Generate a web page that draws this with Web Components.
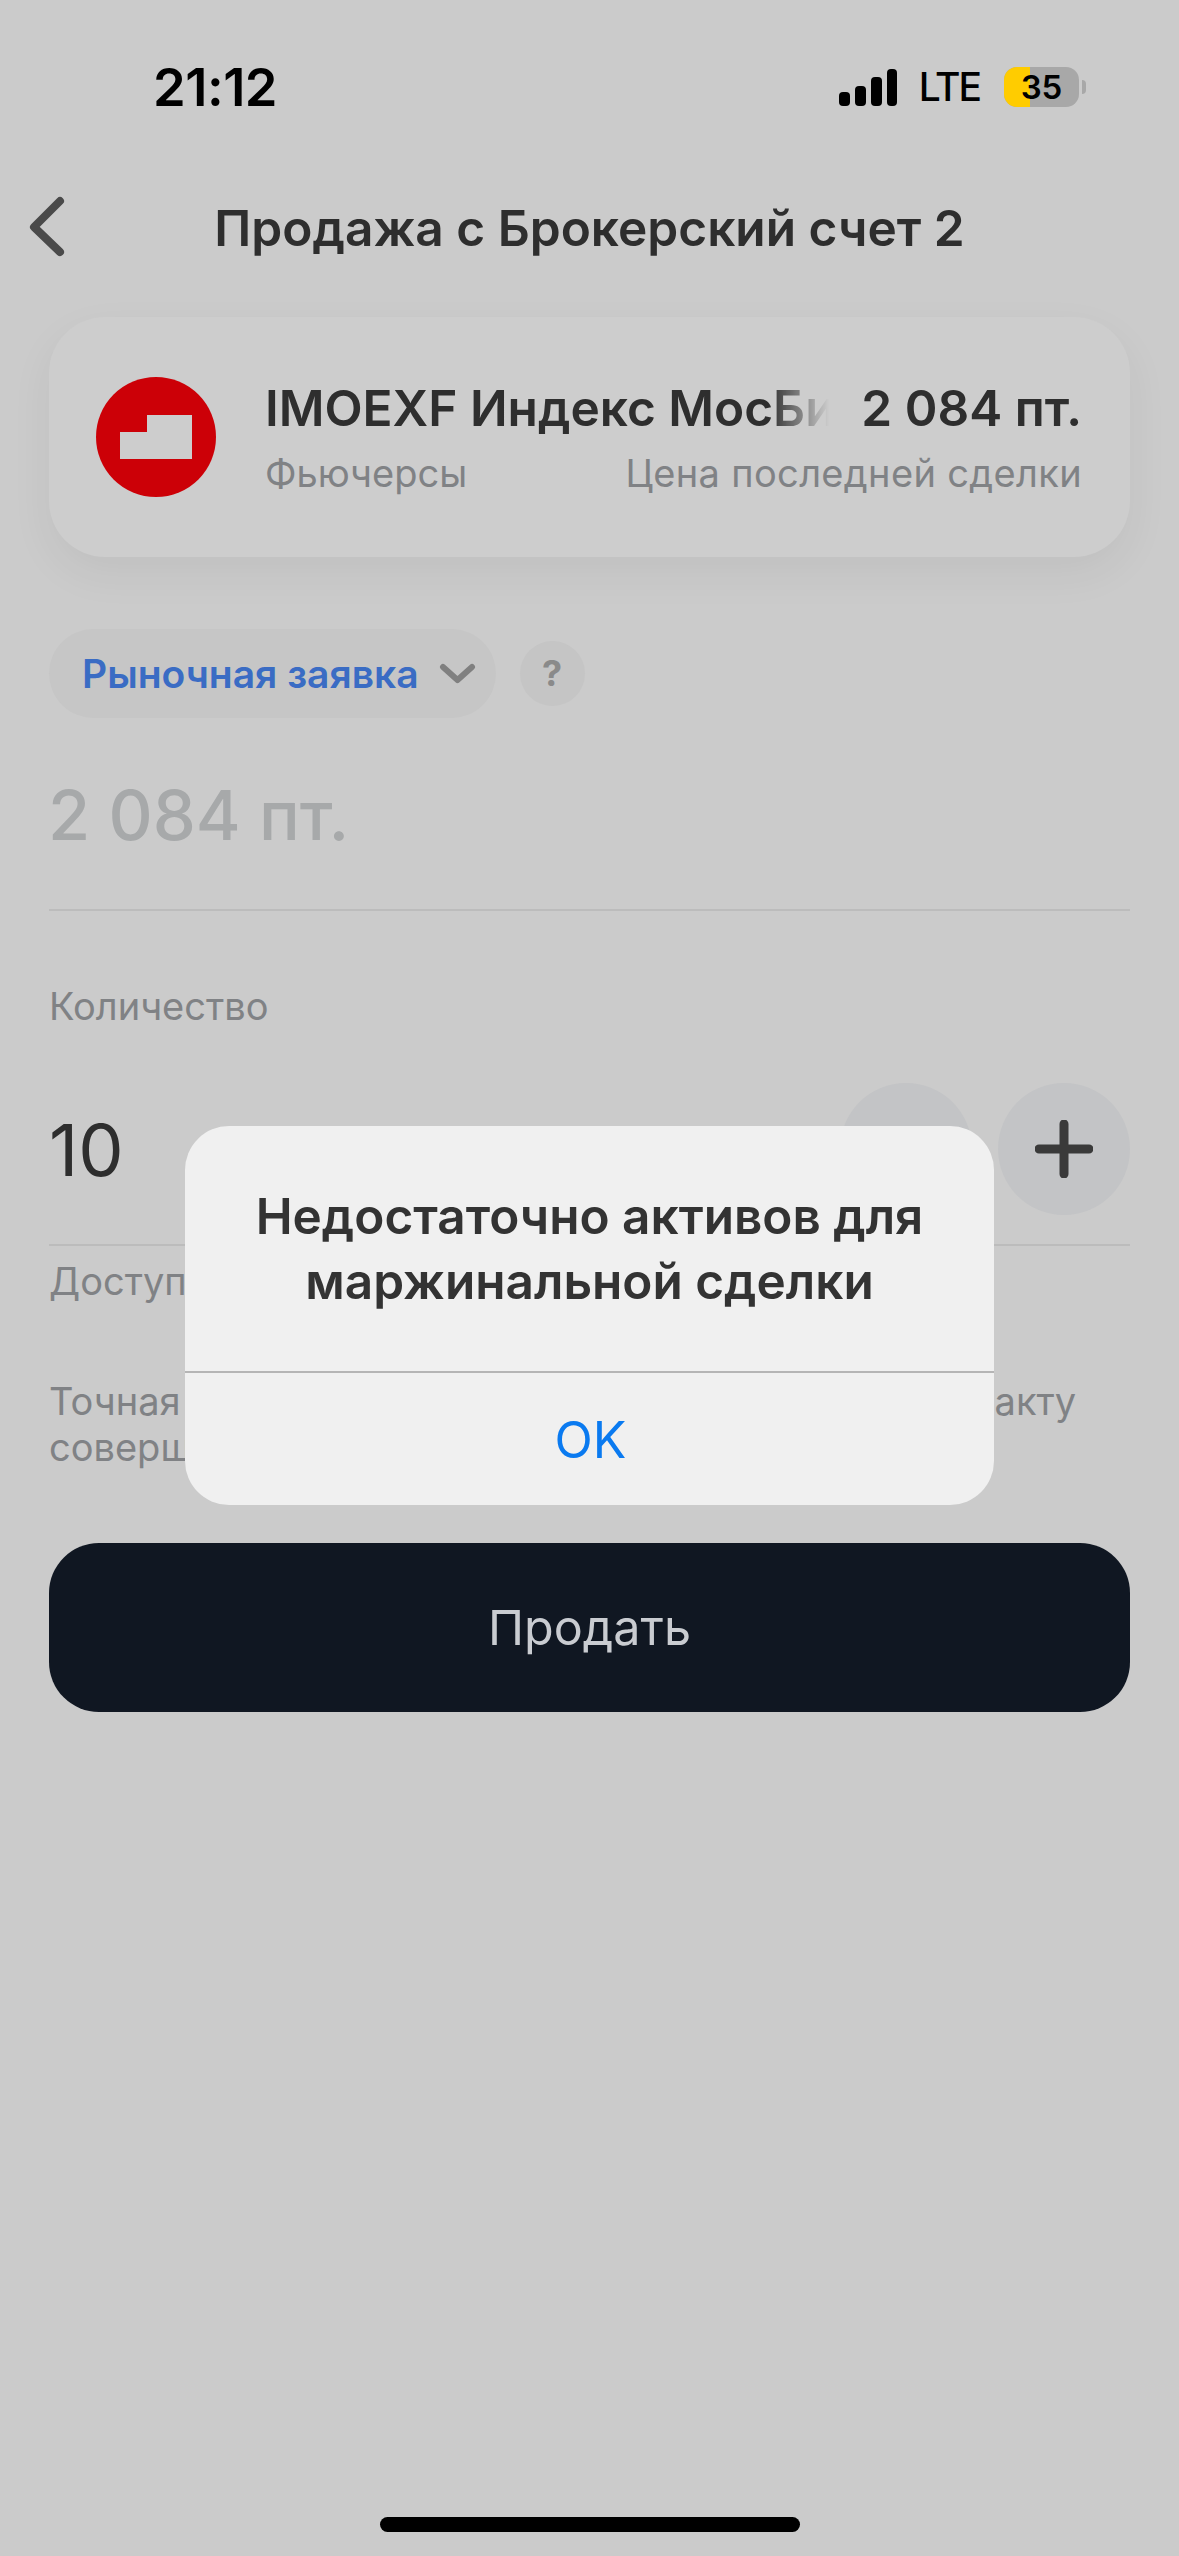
<!DOCTYPE html>
<html lang="ru">
<head>
<meta charset="utf-8">
<title>Продажа</title>
<style>
  html, body { margin: 0; padding: 0; background: #cbcbcb; }
  body {
    width: 1179px;
    height: 2556px;
    overflow: hidden;
    font-family: Inter, "Liberation Sans", sans-serif;
  }
</style>
</head>
<body>
<sell-screen>
  <status-bar time="21:12" network="LTE" battery="35"></status-bar>
  <nav-header>Продажа с Брокерский счет 2</nav-header>
  <instrument-card name="IMOEXF Индекс МосБиржи" kind="Фьючерсы" price="2 084 пт." note="Цена последней сделки"></instrument-card>
  <order-type>Рыночная заявка</order-type>
  <price-field>2 084 пт.</price-field>
  <qty-field label="Количество" value="10" hint="Доступно"></qty-field>
  <order-note>Точная стоимость сделки будет определена по факту<br>совершения сделки</order-note>
  <action-button>Продать</action-button>
  <alert-dialog action="OK">Недостаточно активов для<br>маржинальной сделки</alert-dialog>
  <home-indicator></home-indicator>
</sell-screen>

<script>
class SellScreen extends HTMLElement {
  constructor() {
    super();
    this.attachShadow({ mode: "open" });
    this.shadowRoot.innerHTML = `
    <style>
      :host {
        display: flex;
        flex-direction: column;
        position: relative;
        width: 1179px;
        height: 2556px;
        background: #cbcbcb;
      }
    </style>
    <slot></slot>`;
  }
}

class StatusBar extends HTMLElement {
  constructor() {
    super();
    this.attachShadow({ mode: "open" });
  }

  static get styles() {
    return `
      :host {
        display: flex;
        justify-content: space-between;
        align-items: center;
        height: 62px;
        padding: 56px 93px 58px 153px;
        color: #000;
      }
      .time { font-size: 52.5px; font-weight: 600; letter-spacing: -0.5px; line-height: 62px; }
      .right { display: flex; align-items: center; }
      .net { font-size: 39px; font-weight: 500; letter-spacing: -2px; margin: 0 24px 0 22px; line-height: 62px; }
      .battery {
        position: relative;
        width: 75px;
        height: 40px;
        border-radius: 13px;
        overflow: hidden;
        background: #a8a8a8;
        font-size: 33px;
        font-weight: 600;
        line-height: 40px;
        text-align: center;
      }
      .level { position: absolute; left: 0; top: 0; bottom: 0; width: 26px; background: #ffcc00; }
      .pct { position: relative; }
      .nub { width: 4px; height: 14px; margin-left: 3px; border-radius: 0 4px 4px 0; background: #a8a8a8; }
      svg { display: block; }
    `;
  }

  connectedCallback() {
    this.shadowRoot.innerHTML = `
    <style>${StatusBar.styles}</style>
    <div class="time">${this.getAttribute("time")}</div>
    <div class="right">
      <svg width="58" height="37" viewBox="0 0 58 37" fill="#000">
        <rect x="0" y="23" width="11" height="14" rx="4"/>
        <rect x="16" y="17" width="11" height="20" rx="4"/>
        <rect x="32" y="8" width="11" height="29" rx="4"/>
        <rect x="48" y="0" width="10" height="37" rx="4"/>
      </svg>
      <div class="net">${this.getAttribute("network")}</div>
      <div class="battery"><div class="level"></div><span class="pct">${this.getAttribute("battery")}</span></div>
      <div class="nub"></div>
    </div>`;
  }
}

class NavHeader extends HTMLElement {
  constructor() {
    super();
    this.attachShadow({ mode: "open" });
    this.shadowRoot.innerHTML = `
    <style>
      :host {
        display: flex;
        align-items: center;
        justify-content: center;
        position: relative;
        height: 104px;
        color: #2e2e2e;
        font-size: 49.6px;
        font-weight: 600;
      }
      .back { position: absolute; left: 26px; top: 16px; }
    </style>
    <svg class="back" width="44" height="68" viewBox="0 0 44 68">
      <path d="M34 9 L8 35 L34 60" fill="none" stroke="#4a4a4a" stroke-width="8" stroke-linecap="round" stroke-linejoin="round"/>
    </svg>
    <slot></slot>`;
  }
}

class InstrumentCard extends HTMLElement {
  constructor() {
    super();
    this.attachShadow({ mode: "open" });
  }

  static get styles() {
    return `
      :host {
        display: flex;
        align-items: center;
        gap: 49px;
        height: 240px;
        margin: 37px 49px 0;
        padding: 0 48px 0 47px;
        border-radius: 56px;
        background: #cdcdcd;
        box-shadow: 0 16px 44px rgba(0, 0, 0, 0.055);
      }
      svg { display: block; flex: none; }
      .info { flex: 1; min-width: 0; display: flex; flex-direction: column; gap: 11px; }
      .row { display: flex; justify-content: space-between; align-items: center; gap: 32px; }
      .name, .price { font-size: 49.6px; font-weight: 600; color: #2e2e2e; line-height: 60px; white-space: nowrap; }
      .name {
        flex: 1;
        min-width: 0;
        overflow: hidden;
        -webkit-mask-image: linear-gradient(to right, #000 calc(100% - 60px), transparent);
        mask-image: linear-gradient(to right, #000 calc(100% - 60px), transparent);
      }
      .sub { font-size: 38px; color: #808285; line-height: 48px; white-space: nowrap; }
      .note { letter-spacing: 0.35px; }
    `;
  }

  connectedCallback() {
    this.shadowRoot.innerHTML = `
    <style>${InstrumentCard.styles}</style>
    <svg width="120" height="120" viewBox="0 0 120 120">
      <circle cx="60" cy="60" r="60" fill="#cc0007"/>
      <path d="M24 55 H51 V38 H96 V82 H24 Z" fill="#cdcdcd"/>
    </svg>
    <div class="info">
      <div class="row">
        <div class="name">${this.getAttribute("name")}</div>
        <div class="price">${this.getAttribute("price")}</div>
      </div>
      <div class="row">
        <div class="sub">${this.getAttribute("kind")}</div>
        <div class="sub note">${this.getAttribute("note")}</div>
      </div>
    </div>`;
  }
}

class OrderType extends HTMLElement {
  constructor() {
    super();
    this.attachShadow({ mode: "open" });
    this.shadowRoot.innerHTML = `
    <style>
      :host {
        display: flex;
        align-items: center;
        gap: 24px;
        margin: 72px 49px 0;
      }
      .pill {
        display: flex;
        align-items: center;
        gap: 20px;
        height: 89px;
        padding: 0 20px 0 33px;
        border-radius: 45px;
        background: #c6c6c6;
        color: #3a6cc4;
        font-size: 39px;
        font-weight: 600;
      }
      .help {
        width: 65px;
        height: 65px;
        border-radius: 50%;
        background: #c5c5c5;
        color: #8a8a8a;
        font-size: 36px;
        font-weight: 700;
        line-height: 65px;
        text-align: center;
      }
      svg { display: block; }
    </style>
    <div class="pill">
      <slot></slot>
      <svg width="37" height="21" viewBox="0 0 37 21">
        <path d="M4 4 L18.5 17 L33 4" fill="none" stroke="#808080" stroke-width="6" stroke-linecap="round" stroke-linejoin="round"/>
      </svg>
    </div>
    <div class="help">?</div>`;
  }
}

class PriceField extends HTMLElement {
  constructor() {
    super();
    this.attachShadow({ mode: "open" });
    this.shadowRoot.innerHTML = `
    <style>
      :host {
        display: block;
        margin: 0 49px;
        height: 193px;
        box-sizing: border-box;
        padding-top: 56px;
        border-bottom: 2px solid #bcbcbc;
        color: #a7a9aa;
        font-size: 68.5px;
        font-weight: 500;
        line-height: 84px;
        text-indent: -1px;
      }
    </style>
    <slot></slot>`;
  }
}

class QtyField extends HTMLElement {
  constructor() {
    super();
    this.attachShadow({ mode: "open" });
  }

  static get styles() {
    return `
      :host { display: block; margin: 0 49px; }
      .label { padding-top: 71px; font-size: 38px; color: #808285; line-height: 48px; }
      .row {
        display: flex;
        align-items: center;
        gap: 26px;
        height: 133px;
        margin-top: 52px;
      }
      .value { flex: 1; font-size: 72px; color: #2e2e2e; line-height: 88px; padding-top: 2px; }
      .step {
        display: flex;
        align-items: center;
        justify-content: center;
        width: 132px;
        height: 132px;
        border-radius: 50%;
        background: #c3c4c6;
      }
      .line { margin-top: 29px; border-top: 2px solid #bcbcbc; }
      .hint { margin-top: 11px; font-size: 38px; color: #808285; line-height: 48px; }
      svg { display: block; }
    `;
  }

  connectedCallback() {
    this.shadowRoot.innerHTML = `
    <style>${QtyField.styles}</style>
    <div class="label">${this.getAttribute("label")}</div>
    <div class="row">
      <div class="value">${this.getAttribute("value")}</div>
      <div class="step">
        <svg width="58" height="58" viewBox="0 0 58 58"><path d="M4 29 H54" stroke="#3a3a3a" stroke-width="9" stroke-linecap="round"/></svg>
      </div>
      <div class="step">
        <svg width="58" height="58" viewBox="0 0 58 58"><path d="M4 29 H54 M29 4 V54" stroke="#3a3a3a" stroke-width="9" stroke-linecap="round"/></svg>
      </div>
    </div>
    <div class="line"></div>
    <div class="hint">${this.getAttribute("hint")}</div>`;
  }
}

class OrderNote extends HTMLElement {
  constructor() {
    super();
    this.attachShadow({ mode: "open" });
    this.shadowRoot.innerHTML = `
    <style>
      :host {
        display: block;
        margin: 73px 49px 0;
        font-size: 38px;
        word-spacing: 3px;
        color: #808285;
        line-height: 46px;
        white-space: nowrap;
      }
    </style>
    <slot></slot>`;
  }
}

class ActionButton extends HTMLElement {
  constructor() {
    super();
    this.attachShadow({ mode: "open" });
    this.shadowRoot.innerHTML = `
    <style>
      :host {
        display: flex;
        align-items: center;
        justify-content: center;
        height: 169px;
        margin: 73px 49px 0;
        border-radius: 50px;
        background: #101722;
        color: #c9ccd1;
        font-size: 48.5px;
      }
    </style>
    <slot></slot>`;
  }
}

class AlertDialog extends HTMLElement {
  constructor() {
    super();
    this.attachShadow({ mode: "open" });
  }

  static get styles() {
    return `
      :host {
        position: absolute;
        left: 185px;
        top: 1126px;
        width: 809px;
        height: 379px;
        display: flex;
        flex-direction: column;
        border-radius: 44px;
        background: #f0f0f0;
      }
      .message {
        height: 247px;
        box-sizing: border-box;
        padding-top: 58px;
        border-bottom: 2px solid #b5b5b5;
        color: #333;
        font-size: 49.5px;
        font-weight: 600;
        line-height: 65px;
        text-align: center;
      }
      .action {
        flex: 1;
        display: flex;
        align-items: center;
        justify-content: center;
        padding: 2px 0 0 2px;
        color: #0a7af0;
        font-size: 50px;
      }
    `;
  }

  connectedCallback() {
    this.shadowRoot.innerHTML = `
    <style>${AlertDialog.styles}</style>
    <div class="message"><slot></slot></div>
    <div class="action">${this.getAttribute("action")}</div>`;
  }
}

class HomeIndicator extends HTMLElement {
  constructor() {
    super();
    this.attachShadow({ mode: "open" });
    this.shadowRoot.innerHTML = `
    <style>
      :host {
        position: absolute;
        left: 380px;
        bottom: 24px;
        width: 420px;
        height: 15px;
        border-radius: 8px;
        background: #000;
      }
    </style>`;
  }
}

customElements.define("sell-screen", SellScreen);
customElements.define("status-bar", StatusBar);
customElements.define("nav-header", NavHeader);
customElements.define("instrument-card", InstrumentCard);
customElements.define("order-type", OrderType);
customElements.define("price-field", PriceField);
customElements.define("qty-field", QtyField);
customElements.define("order-note", OrderNote);
customElements.define("action-button", ActionButton);
customElements.define("alert-dialog", AlertDialog);
customElements.define("home-indicator", HomeIndicator);
</script>
</body>
</html>
